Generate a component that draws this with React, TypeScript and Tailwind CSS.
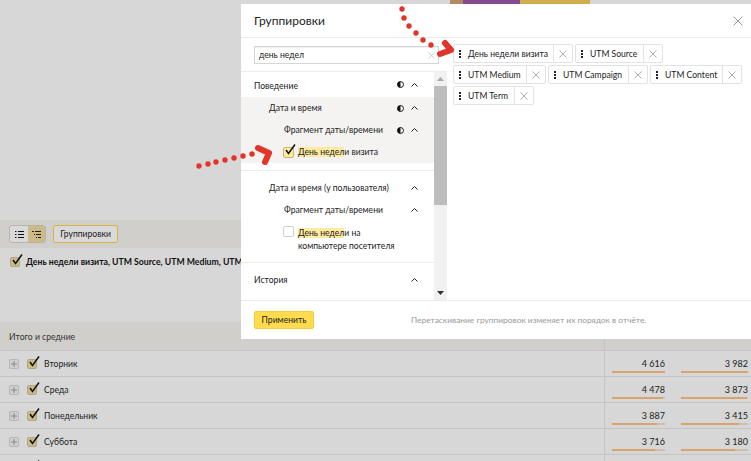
const F = "font-['Lato','Liberation_Sans',sans-serif]";

function Chevron({ className = "" }: { className?: string }) {
  return (
    <svg width="9" height="6" viewBox="0 0 9 6" className={`shrink-0 ${className}`} fill="none" stroke="#222" strokeWidth="1">
      <path d="M1.5 4.5l3-3 3 3" />
    </svg>
  );
}

function Half() {
  return (
    <svg width="7" height="7" viewBox="0 0 8 8" className="shrink-0">
      <circle cx="4" cy="4" r="3.4" fill="#fff" stroke="#111" strokeWidth="1.1" />
      <path d="M4 .5a3.5 3.5 0 0 0 0 7z" fill="#111" />
    </svg>
  );
}

function Cross({ size = 9, color = "#aaa" }: { size?: number; color?: string }) {
  return (
    <svg width={size} height={size} viewBox="0 0 9 9" fill="none" stroke={color} strokeWidth="0.9" className="shrink-0">
      <path d="M.5.5l8 8M8.5.5l-8 8" />
    </svg>
  );
}

function Check({ bg = "bg-[#cdbb85]", border = "border-[#b0a78a]", size = "w-[10px] h-[10px]" }: { bg?: string; border?: string; size?: string }) {
  return (
    <span className={`relative inline-block ${size} shrink-0 rounded-[2px] border ${bg} ${border}`}>
      <svg width="13" height="13" viewBox="0 0 13 13" className="absolute left-0 -top-[5px]" fill="none" stroke="#111" strokeWidth="1.5">
        <path d="M2 7l2.5 3.5L11 1.5" />
      </svg>
    </span>
  );
}

function Plus() {
  return (
    <span className="w-[10px] h-[10px] rounded-[2px] border border-[#b5b5b5] bg-[#cfcfcf] flex items-center justify-center shrink-0">
      <svg width="6" height="6" viewBox="0 0 6 6" stroke="#8a8a8a" strokeWidth="1"><path d="M3 0v6M0 3h6" /></svg>
    </span>
  );
}

function Bar({ w, v, p }: { w: string; v: string; p: number }) {
  return (
    <div className={`${w} flex flex-col items-end pt-[7px]`}>
      <span className="text-[9px] leading-[12px] text-[#222]">{v}</span>
      <div className="w-full h-[2px] mt-[1px] bg-[#cdbfae]">
        <div className="h-full bg-[#d7a46f]" style={{ width: `${p}%` }} />
      </div>
    </div>
  );
}

function Row({ name, a, ap, b, bp }: { name: string; a: string; ap: number; b: string; bp: number }) {
  return (
    <div className="flex h-[26px] border-b border-[#c4c4c4] shrink-0">
      <div className="w-[605px] flex items-center pl-[9px] border-r border-[#c4c4c4]">
        <Plus />
        <span className="ml-[8px] flex"><Check /></span>
        <span className="ml-[7px] pt-[2px] text-[8.6px] text-[#222]">{name}</span>
      </div>
      <div className="flex-1 flex gap-[16px] pl-[7px]">
        <Bar w="w-[53px]" v={a} p={ap} />
        <Bar w="w-[67px]" v={b} p={bp} />
      </div>
    </div>
  );
}

function Chip({ label, w }: { label: string; w: string }) {
  return (
    <div className={`flex h-[19px] rounded-[2px] border border-[#e2e2e2] bg-white ${w}`}>
      <div className="flex-1 flex items-center min-w-0">
        <span className="ml-[5px] w-[2px] flex flex-col gap-[1px] shrink-0">
          <i className="block w-[2px] h-[2px] bg-[#222]" />
          <i className="block w-[2px] h-[2px] bg-[#222]" />
          <i className="block w-[2px] h-[2px] bg-[#222]" />
        </span>
        <span className="ml-[7px] pt-[1px] text-[8.6px] text-[#222] whitespace-nowrap">{label}</span>
      </div>
      <div className="w-[19px] border-l border-[#e2e2e2] flex items-center justify-center shrink-0">
        <Cross size={8} color="#999" />
      </div>
    </div>
  );
}

function Head({ label, pl, half = true, h = "h-[22px]", tp = "" }: { label: string; pl: string; half?: boolean; h?: string; tp?: string }) {
  return (
    <div className={`flex items-center ${h} ${pl}`}>
      <span className={`flex-1 text-[8.6px] text-[#222] whitespace-nowrap ${tp}`}>{label}</span>
      <span className="w-[7px] mr-[6px] flex shrink-0">{half && <Half />}</span>
      <Chevron className="mr-[15px]" />
    </div>
  );
}

export default function App() {
  return (
    <div className={`${F} relative w-[751px] h-[461px] overflow-hidden bg-[#d7d7d7] flex flex-col`}>
      <div className="h-[4px] flex shrink-0 pl-[450px]">
        <div className="w-[13px] bg-[#b08a62]" />
        <div className="w-[57px] bg-[#86498f]" />
        <div className="w-[70px] bg-[#d0ac4e]" />
      </div>
      <div className="h-[216px] shrink-0" />
      <div className="h-[28px] shrink-0 bg-[#d0cfcc] flex items-center pl-[9px]">
        <div className="flex h-[18px] rounded-[3px] border border-[#b5b5b0] overflow-hidden">
          <div className="w-[18px] bg-[#d9d9d9] flex items-center justify-center">
            <svg width="9" height="7" viewBox="0 0 9 7" fill="#111"><path d="M0 0h1.5v1H0zM3 0h6v1H3zM0 3h1.5v1H0zM3 3h6v1H3zM0 6h1.5v1H0zM3 6h6v1H3z" /></svg>
          </div>
          <div className="w-[17px] bg-[#cdbb85] flex items-center justify-center">
            <svg width="9" height="7" viewBox="0 0 9 7" fill="#222"><path d="M0 0h2v1H0zM3 0h6v1H3zM2 3h1v1H2zM4 3h5v1H4zM4 6h1v1H4zM6 6h3v1H6z" /></svg>
          </div>
        </div>
        <div className="ml-[7px] w-[65px] h-[18px] pt-[1px] rounded-[2px] border border-[#d9b23f] bg-[#d9d9d9] flex items-center justify-center text-[8.6px] text-[#222]">
          Группировки
        </div>
      </div>
      <div className="h-[74px] shrink-0 pl-[10px] pt-[7px] flex items-start">
        <span className="mt-[2px] flex"><Check /></span>
        <span className="ml-[6px] text-[8.7px] leading-[14px] font-bold text-[#111] whitespace-nowrap">
          День недели визита, UTM Source, UTM Medium, UTM Campaign
        </span>
      </div>
      <div className="h-[29px] shrink-0 bg-[#d0cfcc] border-b border-[#c4c4c4] flex">
        <div className="w-[605px] flex items-center pl-[9px] pt-[2px] border-r border-[#c4c4c4] text-[8.6px] text-[#333]">Итого и средние</div>
        <div className="flex-1 flex gap-[16px] pl-[7px] pt-[8px] text-[9px] leading-[12px] text-[#222]">
          <span className="w-[53px] text-right">21 404</span>
          <span className="w-[67px] text-right">22 067</span>
        </div>
      </div>
      <Row name="Вторник" a="4 616" ap={100} b="3 982" bp={100} />
      <Row name="Среда" a="4 478" ap={97} b="3 873" bp={98} />
      <Row name="Понедельник" a="3 887" ap={84} b="3 415" bp={86} />
      <Row name="Суббота" a="3 716" ap={81} b="3 180" bp={80} />
      <Row name="" a="" ap={0} b="" bp={0} />

      <div className="absolute left-[241px] top-[4px] w-[510px] h-[335px] bg-white flex flex-col">
        <div className="h-[34px] shrink-0 flex items-center pl-[13px] pr-[8px] pt-[1px] border-b border-[#ececec]">
          <span className="flex-1 text-[12px] text-[#222]">Группировки</span>
          <Cross size={10} color="#999" />
        </div>
        <div className="h-[263px] shrink-0 flex min-h-0 border-b border-[#ececec]">
          <div className="w-[206px] shrink-0 flex flex-col">
            <div className="h-[34px] shrink-0 border-b border-[#ececec] pl-[13px] pt-[8px]">
              <div className="w-[185px] h-[18px] border border-[#d6d6d6] flex items-center pl-[4px] pr-[3px] shadow-[inset_0_1px_1px_rgba(0,0,0,0.06)]">
                <span className="flex-1 text-[8.6px] text-[#222]">день недел</span>
                <Cross size={7} color="#bbb" />
              </div>
            </div>
            <div className="flex-1 flex min-h-0">
              <div className="w-[193px] shrink-0 flex flex-col overflow-hidden">
                <Head label="Поведение" pl="pl-[13px]" h="h-[25px]" tp="pt-[3px]" />
                <div className="pb-[7px] border-b border-[#ececec]">
                  <div className="bg-[#f4f3f1]">
                    <Head label="Дата и время" pl="pl-[28px]" />
                    <Head label="Фрагмент даты/времени" pl="pl-[43px]" />
                    <div className="flex items-center h-[22px] pl-[42px]">
                      <Check bg="bg-[#ffeba0]" border="border-[#c8b670]" size="w-[11px] h-[11px]" />
                      <span className="ml-[4px] pt-[1px] text-[8.6px] text-[#222] whitespace-nowrap"><mark className="bg-[#ffeba0] text-[#222]">День недел</mark>и визита</span>
                    </div>
                  </div>
                </div>
                <div className="pt-[6px] pb-[9px] border-b border-[#ececec]">
                  <Head label="Дата и время (у пользователя)" pl="pl-[28px]" half={false} tp="pt-[1px]" />
                  <Head label="Фрагмент даты/времени" pl="pl-[43px]" half={false} tp="pt-[1px]" />
                  <div className="flex items-start pl-[42px] pt-[4px]">
                    <span className="w-[11px] h-[11px] shrink-0 mt-[1px] rounded-[2px] border border-[#d0d0d0]" />
                    <span className="ml-[4px] pt-[2px] text-[8.6px] leading-[13px] text-[#222] w-[100px]"><mark className="bg-[#ffeba0] text-[#222]">День недел</mark>и на компьютере посетителя</span>
                  </div>
                </div>
                <Head label="История" pl="pl-[13px]" half={false} h="h-[34px]" />
              </div>
              <div className="w-[13px] bg-[#f1f1f1] flex flex-col items-center">
                <svg width="7" height="4" viewBox="0 0 7 4" className="mt-[5px] shrink-0" fill="#aaa"><path d="M3.5 0L7 4H0z" /></svg>
                <div className="w-full h-[119px] mt-[5px] bg-[#bdbdbd]" />
                <svg width="7" height="4" viewBox="0 0 7 4" className="mt-auto mb-[5px] shrink-0" fill="#333"><path d="M0 0h7L3.5 4z" /></svg>
              </div>
            </div>
          </div>
          <div className="flex-1 pl-[6px] pt-[6px] flex flex-wrap content-start gap-x-[2px] gap-y-[2px]">
            <Chip label="День недели визита" w="w-[120px]" />
            <Chip label="UTM Source" w="w-[88px]" />
            <Chip label="UTM Medium" w="w-[93px]" />
            <Chip label="UTM Campaign" w="w-[100px]" />
            <Chip label="UTM Content" w="w-[92px]" />
            <Chip label="UTM Term" w="w-[81px]" />
          </div>
        </div>
        <div className="flex-1 flex items-center pl-[13px]">
          <div className="w-[60px] h-[18px] rounded-[2px] border border-[#f2cb3e] bg-[#ffdb4d] flex items-center justify-center text-[8.6px] text-[#222]">Применить</div>
          <span className="ml-[97px] text-[8.4px] text-[#999] whitespace-nowrap">Перетаскивание группировок изменяет их порядок в отчёте.</span>
        </div>
      </div>

      <svg width="751" height="461" viewBox="0 0 751 461" className="absolute left-0 top-0 pointer-events-none">
        <g fill="#e3342a">
          <circle cx="402" cy="9" r="2.7" /><circle cx="404" cy="18" r="2.7" /><circle cx="409" cy="26" r="2.7" />
          <circle cx="416" cy="33" r="2.7" /><circle cx="423" cy="40" r="2.7" /><circle cx="431" cy="45" r="2.7" />
          <circle cx="199" cy="166" r="2.7" /><circle cx="208" cy="164" r="2.7" /><circle cx="216" cy="162" r="2.7" />
          <circle cx="225" cy="160" r="2.7" /><circle cx="234" cy="158" r="2.7" /><circle cx="243" cy="156" r="2.7" /><circle cx="252" cy="154" r="2.7" />
        </g>
        <g fill="none" stroke="#e3342a" strokeWidth="6" strokeLinecap="round" strokeLinejoin="round">
          <path d="M445 43l6 7-11 4" />
          <path d="M258 148l11 5-4 9" />
        </g>
      </svg>
    </div>
  );
}
